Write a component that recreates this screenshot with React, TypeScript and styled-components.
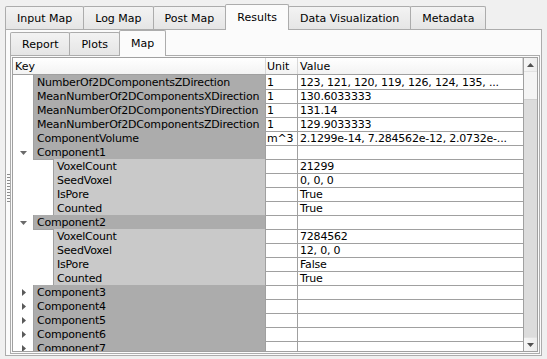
import React from 'react'
import styled, { createGlobalStyle } from 'styled-components'

const GlobalStyle = createGlobalStyle`
  html, body {
    margin: 0;
    padding: 0;
    background: #f0f0f0;
  }
  body {
    font-family: 'DejaVu Sans', Tahoma, sans-serif;
    font-size: 11px;
    color: #000;
  }
`

const LINE = '#a0a0a0'

const Window = styled.div`
  width: 547px;
  height: 359px;
  box-sizing: border-box;
  padding: 4px 0 0 5px;
  background: #f0f0f0;
  overflow: hidden;
`
const TabBar = styled.div`
  display: flex;
  align-items: flex-end;
  height: 25px;
  position: relative;
  z-index: 1;
`
const Tab = styled.div<{ $active?: boolean }>`
  box-sizing: border-box;
  height: ${p => (p.$active ? 26 : 23)}px;
  margin-right: -1px;
  margin-bottom: ${p => (p.$active ? -1 : 0)}px;
  padding: 0 11px ${p => (p.$active ? 1 : 0)}px 11px;
  border: 1px solid #acacac;
  border-bottom: none;
  border-radius: 2px 2px 0 0;
  background: ${p => (p.$active ? '#fbfbfb' : 'linear-gradient(#f3f3f3, #e5e5e5)')};
  display: flex;
  align-items: center;
  white-space: nowrap;
  position: relative;
  z-index: ${p => (p.$active ? 2 : 1)};
`
const OuterPane = styled.div`
  box-sizing: border-box;
  width: 537px;
  height: 327px;
  border: 1px solid #acacac;
  background: #fbfbfb;
  display: flex;
  padding: 0 1px 1px 0;
`
const GripColumn = styled.div`
  width: 4px;
  display: flex;
  align-items: center;
  justify-content: flex-end;
`
const Grip = styled.div`
  width: 3px;
  height: 30px;
  margin-top: -6px;
  background: repeating-linear-gradient(to bottom, #8c8c8c 0 1px, transparent 1px 3px);
`
const InnerWidget = styled.div`
  width: 530px;
  display: flex;
  flex-direction: column;
`
const InnerPane = styled.div`
  box-sizing: border-box;
  height: 299px;
  border: 1px solid #acacac;
  padding: 1px;
  background: #fbfbfb;
`
const Tree = styled.div`
  box-sizing: border-box;
  height: 295px;
  border: 1px solid ${LINE};
  background: #fff;
  display: flex;
`
const Table = styled.div`
  flex: 1;
  display: flex;
  flex-direction: column;
  overflow: hidden;
`
const Columns = styled.div`
  display: grid;
  grid-template-columns: 253px 32px 225px;
  flex-shrink: 0;
`
const Header = styled(Columns)`
  height: 17px;
  box-sizing: border-box;
  border-bottom: 1px solid ${LINE};
  background: linear-gradient(#ffffff, #f3f3f3);
`
const HeaderCell = styled.div<{ $pad: number }>`
  padding: 1px 0 0 ${p => p.$pad}px;
  line-height: 15px;
  border-right: 1px solid #d8d8d8;
  white-space: nowrap;
  overflow: hidden;
`
const Row = styled(Columns)`
  height: 14px;
`
const KeyCol = styled.div`
  display: flex;
  min-width: 0;
`
const Branch = styled.div<{ $indent: number }>`
  width: ${p => p.$indent}px;
  flex-shrink: 0;
  display: flex;
  align-items: center;
  justify-content: center;
  padding-left: ${p => (p.$indent > 20 ? 0 : 1)}px;
  box-sizing: border-box;
`
const Cell = styled.div`
  box-sizing: border-box;
  border-bottom: 1px solid ${LINE};
  padding-top: 2px;
  line-height: 12px;
  letter-spacing: -0.2px;
  white-space: nowrap;
  overflow: hidden;
`
const KeyLabel = styled(Cell)<{ $level: number }>`
  flex: 1;
  min-width: 0;
  padding-left: 3px;
  border-left: 1px solid ${LINE};
  border-right: 1px solid ${LINE};
  background: ${p => (p.$level === 0 ? '#acacac' : '#c9c9c9')};
`
const UnitCell = styled(Cell)`
  padding-left: 1px;
  border-right: 1px solid ${LINE};
`
const ValueCell = styled(Cell)`
  padding-left: 2px;
`
const ScrollBar = styled.div`
  box-sizing: border-box;
  width: 14px;
  border-left: 1px solid ${LINE};
  display: flex;
  flex-direction: column;
  background: #f4f4f4;
`
const ScrollButton = styled.div`
  height: 14px;
  flex-shrink: 0;
  display: flex;
  align-items: center;
  justify-content: center;
  background: linear-gradient(to right, #f6f6f6, #ececec);
  border-bottom: 1px solid #e2e2e2;
  box-sizing: border-box;
  &:last-child {
    border-bottom: none;
    border-top: 1px solid #e2e2e2;
  }
`
const Track = styled.div`
  flex: 1;
  display: flex;
  flex-direction: column;
`
const TrackGap = styled.div<{ $h: number }>`
  height: ${p => p.$h}px;
  flex-shrink: 0;
`
const Thumb = styled.div`
  flex: 1;
  background: #dcdcdc;
  border-top: 1px solid #d0d0d0;
`

type RowData = {
  key: string
  unit?: string
  value?: string
  level: 0 | 1
  arrow?: 'open' | 'closed'
}

const rows: RowData[] = [
  { key: 'NumberOf2DComponentsZDirection', unit: '1', value: '123, 121, 120, 119, 126, 124, 135, ...', level: 0 },
  { key: 'MeanNumberOf2DComponentsXDirection', unit: '1', value: '130.6033333', level: 0 },
  { key: 'MeanNumberOf2DComponentsYDirection', unit: '1', value: '131.14', level: 0 },
  { key: 'MeanNumberOf2DComponentsZDirection', unit: '1', value: '129.9033333', level: 0 },
  { key: 'ComponentVolume', unit: 'm^3', value: '2.1299e-14, 7.284562e-12, 2.0732e-...', level: 0 },
  { key: 'Component1', level: 0, arrow: 'open' },
  { key: 'VoxelCount', value: '21299', level: 1 },
  { key: 'SeedVoxel', value: '0, 0, 0', level: 1 },
  { key: 'IsPore', value: 'True', level: 1 },
  { key: 'Counted', value: 'True', level: 1 },
  { key: 'Component2', level: 0, arrow: 'open' },
  { key: 'VoxelCount', value: '7284562', level: 1 },
  { key: 'SeedVoxel', value: '12, 0, 0', level: 1 },
  { key: 'IsPore', value: 'False', level: 1 },
  { key: 'Counted', value: 'True', level: 1 },
  { key: 'Component3', level: 0, arrow: 'closed' },
  { key: 'Component4', level: 0, arrow: 'closed' },
  { key: 'Component5', level: 0, arrow: 'closed' },
  { key: 'Component6', level: 0, arrow: 'closed' },
  { key: 'Component7', level: 0, arrow: 'closed' },
]

const outerTabs = ['Input Map', 'Log Map', 'Post Map', 'Results', 'Data Visualization', 'Metadata']
const innerTabs = ['Report', 'Plots', 'Map']

function Arrow({ dir }: { dir: 'open' | 'closed' | 'up' | 'down' }) {
  if (dir === 'open' || dir === 'down')
    return (
      <svg width="7" height="4" viewBox="0 0 7 4">
        <polygon points="0,0 7,0 3.5,4" fill={dir === 'open' ? '#6a6a6a' : '#505050'} />
      </svg>
    )
  if (dir === 'up')
    return (
      <svg width="7" height="4" viewBox="0 0 7 4">
        <polygon points="0,4 7,4 3.5,0" fill="#505050" />
      </svg>
    )
  return (
    <svg width="4" height="7" viewBox="0 0 4 7">
      <polygon points="0,0 4,3.5 0,7" fill="#5a5a5a" />
    </svg>
  )
}

export default function App() {
  return (
    <Window>
      <GlobalStyle />
      <TabBar>
        {outerTabs.map(t => (
          <Tab key={t} $active={t === 'Results'}>
            {t}
          </Tab>
        ))}
      </TabBar>
      <OuterPane>
        <GripColumn>
          <Grip />
        </GripColumn>
        <InnerWidget>
          <TabBar>
            {innerTabs.map(t => (
              <Tab key={t} $active={t === 'Map'}>
                {t}
              </Tab>
            ))}
          </TabBar>
          <InnerPane>
            <Tree>
              <Table>
                <Header>
                  <HeaderCell $pad={2}>Key</HeaderCell>
                  <HeaderCell $pad={1}>Unit</HeaderCell>
                  <HeaderCell $pad={2}>Value</HeaderCell>
                </Header>
                {rows.map((r, i) => (
                  <Row key={i}>
                    <KeyCol>
                      <Branch $indent={r.level === 0 ? 20 : 40}>
                        {r.arrow && <Arrow dir={r.arrow} />}
                      </Branch>
                      <KeyLabel $level={r.level}>{r.key}</KeyLabel>
                    </KeyCol>
                    <UnitCell>{r.unit}</UnitCell>
                    <ValueCell>{r.value}</ValueCell>
                  </Row>
                ))}
              </Table>
              <ScrollBar>
                <ScrollButton>
                  <Arrow dir="up" />
                </ScrollButton>
                <Track>
                  <TrackGap $h={27} />
                  <Thumb />
                </Track>
                <ScrollButton>
                  <Arrow dir="down" />
                </ScrollButton>
              </ScrollBar>
            </Tree>
          </InnerPane>
        </InnerWidget>
      </OuterPane>
    </Window>
  )
}
